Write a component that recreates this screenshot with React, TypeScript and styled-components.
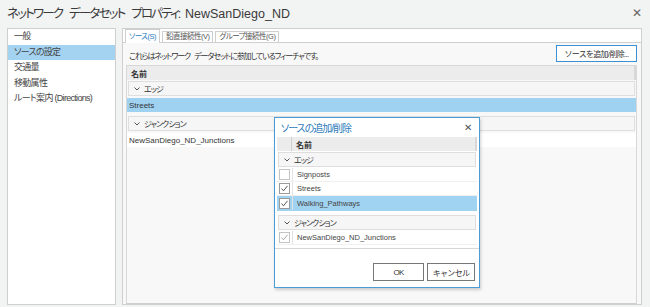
import React from "react";
import styled, { createGlobalStyle } from "styled-components";

const GlobalStyle = createGlobalStyle`
  html, body {
    margin: 0;
    padding: 0;
    background: #f2f3f3;
  }
  body {
    font-family: "Liberation Sans", "Noto Sans CJK JP", sans-serif;
    font-feature-settings: "palt";
    color: #333;
  }
`;

const Window = styled.div`
  width: 650px;
  height: 307px;
  display: flex;
  flex-direction: column;
  overflow: hidden;
  background: #f2f3f3;
`;

const TitleBar = styled.div`
  height: 25px;
  display: flex;
  align-items: center;
  justify-content: space-between;
  padding: 0 8px 0 7px;
  flex-shrink: 0;
`;

const Title = styled.div`
  font-size: 12.5px;
  color: #3a3a3a;
`;

// 和文部分だけ詰める（プロポーショナル仮名の幅に寄せる）
const TitleKana = styled.span`
  letter-spacing: -1.8px;
  word-spacing: 5px;
  margin-right: 2px;
`;

const CloseGlyph = styled.div`
  font-size: 12px;
  color: #666;
`;

const Body = styled.div`
  flex: 1;
  display: flex;
  gap: 6px;
  padding: 3px 8px 2px 7px;
  min-height: 0;
`;

const Sidebar = styled.ul`
  width: 107px;
  margin: 0;
  padding: 0;
  list-style: none;
  background: #fff;
  border: 1px solid #cfcfcf;
`;

const NavItem = styled.li<{ $active?: boolean }>`
  height: 15.5px;
  line-height: 15.5px;
  padding-left: 6px;
  font-size: 9px;
  letter-spacing: -0.7px;
  color: #444;
  background: ${(p) => (p.$active ? "#a4d3f2" : "transparent")};
  white-space: nowrap;
`;

const Main = styled.div`
  flex: 1;
  display: flex;
  flex-direction: column;
  border: 1px solid #cfcfcf;
  background: #f8f8f8;
`;

const TabStrip = styled.div`
  height: 13px;
  display: flex;
  align-items: flex-end;
  gap: 2px;
  padding-left: 2px;
  background: #fff;
  border-bottom: 1px solid #cfcfcf;
  flex-shrink: 0;
`;

const Tab = styled.div<{ $active?: boolean }>`
  height: ${(p) => (p.$active ? "13px" : "10px")};
  line-height: ${(p) => (p.$active ? "13px" : "10px")};
  padding: 0 3px;
  font-size: 7.5px;
  letter-spacing: -0.5px;
  color: ${(p) => (p.$active ? "#2a7cc0" : "#555")};
  border: 1px solid #cfcfcf;
  border-bottom: none;
  background: #fff;
  white-space: nowrap;
  margin-bottom: ${(p) => (p.$active ? "-1px" : "0")};
`;

const TabPanel = styled.div`
  flex: 1;
  position: relative;
  display: flex;
  flex-direction: column;
  padding: 1px 4px 0 3px;
  min-height: 0;
`;

const Toolbar = styled.div`
  height: 18px;
  display: flex;
  align-items: center;
  justify-content: space-between;
  padding-left: 3px;
  margin-bottom: 3px;
`;

const Hint = styled.span`
  font-size: 8px;
  letter-spacing: -1.1px;
  word-spacing: 3px;
  color: #333;
  padding-top: 4px;
`;

const Button = styled.button<{ $primary?: boolean; $w: number }>`
  width: ${(p) => p.$w}px;
  height: ${(p) => (p.$primary ? "17px" : "18px")};
  padding: 0;
  font-family: inherit;
  font-size: 8px;
  letter-spacing: -0.7px;
  color: #333;
  background: #fff;
  border: 1px solid ${(p) => (p.$primary ? "#3d8fd1" : "#777")};
  border-radius: 0;
  white-space: nowrap;
`;

const Grid = styled.div`
  flex: 1;
  border: 1px solid #d8d8d8;
  border-bottom: 1px solid #cfcfcf;
  background: #f8f8f8;
  display: flex;
  flex-direction: column;
  gap: 1px;
`;

const HeaderRow = styled.div`
  height: 14px;
  flex-shrink: 0;
  display: flex;
  align-items: center;
  background: #ececec;
  border-right: 2px solid #d8d8d8;
  font-size: 8px;
  font-weight: bold;
  color: #333;
`;

const HeaderCell = styled.div<{ $w?: number; $divider?: boolean }>`
  width: ${(p) => (p.$w ? `${p.$w}px` : "auto")};
  flex: ${(p) => (p.$w ? "none" : "1")};
  height: 100%;
  display: flex;
  align-items: center;
  padding-left: 4px;
  box-sizing: border-box;
  border-right: ${(p) => (p.$divider ? "1px solid #d0d0d0" : "none")};
`;

const GroupRow = styled.div<{ $gapTop?: number }>`
  height: 13px;
  flex-shrink: 0;
  margin: ${(p) => p.$gapTop ?? 0}px 1px 1px 1px;
  display: flex;
  align-items: center;
  gap: 4px;
  padding-left: 5px;
  border: 1px solid #dedede;
  background: #f6f6f6;
  font-size: 8px;
  letter-spacing: -1px;
  color: #333;
`;

const Chevron = () => (
  <svg width="6" height="4" viewBox="0 0 6 4">
    <polyline points="0.5,0.5 3,3 5.5,0.5" fill="none" stroke="#555" strokeWidth="1" />
  </svg>
);

const DataRow = styled.div<{ $selected?: boolean }>`
  height: 14px;
  flex-shrink: 0;
  display: flex;
  align-items: center;
  padding-left: 2px;
  font-size: 8px;
  color: #333;
  background: ${(p) => (p.$selected ? "#9fd1f1" : "#fff")};
`;

const Dialog = styled.div`
  position: absolute;
  left: 151px;
  top: 74px;
  width: 204px;
  height: 169px;
  background: #fff;
  border: 1px solid #4b9bd6;
  box-shadow: 1px 2px 3px rgba(0, 0, 0, 0.18);
  display: flex;
  flex-direction: column;
`;

const DialogTitle = styled.div`
  height: 19px;
  display: flex;
  align-items: center;
  justify-content: space-between;
  padding: 0 8px 0 6px;
  font-size: 10px;
  letter-spacing: -1px;
  color: #2c7ab9;
`;

const DialogClose = styled.span`
  font-size: 10px;
  color: #555;
`;

const DialogGrid = styled.div`
  margin: 0 2px;
  display: flex;
  flex-direction: column;
`;

const CheckRow = styled.div<{ $selected?: boolean }>`
  height: ${(p) => (p.$selected ? "14px" : "13px")};
  display: flex;
  align-items: center;
  font-size: 7.5px;
  color: #444;
  background: ${(p) => (p.$selected ? "#a0d2f1" : "#fff")};
  border-bottom: 1px solid ${(p) => (p.$selected ? "#a0d2f1" : "#f0f0f0")};
`;

const CheckCell = styled.div`
  width: 15px;
  height: 100%;
  display: flex;
  align-items: center;
  justify-content: center;
  border-right: 1px solid #e2e2e2;
  flex-shrink: 0;
`;

const CheckLabel = styled.span`
  padding-left: 4px;
`;

const Separator = styled.div`
  height: 1px;
  background: #d6d6d6;
  margin-top: 3px;
`;

const DialogFooter = styled.div`
  flex: 1;
  display: flex;
  align-items: flex-end;
  justify-content: flex-end;
  gap: 3px;
  padding: 0 4px 6px 0;
`;

const Check = ({ checked, disabled }: { checked?: boolean; disabled?: boolean }) => (
  <svg width="11" height="11" viewBox="0 0 11 11">
    <rect
      x="0.5"
      y="0.5"
      width="10"
      height="10"
      fill="#fff"
      stroke={disabled || !checked ? "#c4c4c4" : "#9a9a9a"}
    />
    {checked && (
      <polyline
        points="2.5,5.5 4.5,7.8 8.5,2.8"
        fill="none"
        stroke={disabled ? "#a8a8a8" : "#555"}
        strokeWidth="1"
      />
    )}
  </svg>
);

const navItems = ["一般", "ソースの設定", "交通量", "移動属性", "ルート案内 (Directions)"];

const edgeSources = [
  { name: "Signposts", checked: false },
  { name: "Streets", checked: true },
  { name: "Walking_Pathways", checked: true, selected: true },
];

const App = () => {
  return (
    <Window>
      <GlobalStyle />
      <TitleBar>
        <Title>
          <TitleKana>ネットワーク データセット プロパティ:</TitleKana> NewSanDiego_ND
        </Title>
        <CloseGlyph>✕</CloseGlyph>
      </TitleBar>

      <Body>
        <Sidebar>
          {navItems.map((item) => (
            <NavItem key={item} $active={item === "ソースの設定"}>
              {item}
            </NavItem>
          ))}
        </Sidebar>

        <Main>
          <TabStrip>
            <Tab $active>ソース(S)</Tab>
            <Tab>鉛直接続性(V)</Tab>
            <Tab>グループ接続性(G)</Tab>
          </TabStrip>

          <TabPanel>
            <Toolbar>
              <Hint>これらはネットワーク データセットに参加しているフィーチャです。</Hint>
              <Button $primary $w={81}>ソースを追加/削除...</Button>
            </Toolbar>

            <Grid>
              <HeaderRow>
                <HeaderCell>名前</HeaderCell>
              </HeaderRow>
              <GroupRow>
                <Chevron />
                エッジ
              </GroupRow>
              <DataRow $selected>Streets</DataRow>
              <GroupRow $gapTop={3}>
                <Chevron />
                ジャンクション
              </GroupRow>
              <DataRow>NewSanDiego_ND_Junctions</DataRow>
            </Grid>

            {/* ダイアログはパネルの上に重なる */}
            <Dialog>
              <DialogTitle>
                ソースの追加/削除
                <DialogClose>✕</DialogClose>
              </DialogTitle>
              <DialogGrid>
                <HeaderRow>
                  <HeaderCell $w={15} $divider />
                  <HeaderCell>名前</HeaderCell>
                </HeaderRow>
                <GroupRow $gapTop={1}>
                  <Chevron />
                  エッジ
                </GroupRow>
                {edgeSources.map((s) => (
                  <CheckRow key={s.name} $selected={s.selected}>
                    <CheckCell>
                      <Check checked={s.checked} />
                    </CheckCell>
                    <CheckLabel>{s.name}</CheckLabel>
                  </CheckRow>
                ))}
                <GroupRow $gapTop={4}>
                  <Chevron />
                  ジャンクション
                </GroupRow>
                <CheckRow>
                  <CheckCell>
                    <Check checked disabled />
                  </CheckCell>
                  <CheckLabel>NewSanDiego_ND_Junctions</CheckLabel>
                </CheckRow>
              </DialogGrid>
              <Separator />
              <DialogFooter>
                <Button $w={51}>OK</Button>
                <Button $w={48}>キャンセル</Button>
              </DialogFooter>
            </Dialog>
          </TabPanel>
        </Main>
      </Body>
    </Window>
  );
};

export default App;
